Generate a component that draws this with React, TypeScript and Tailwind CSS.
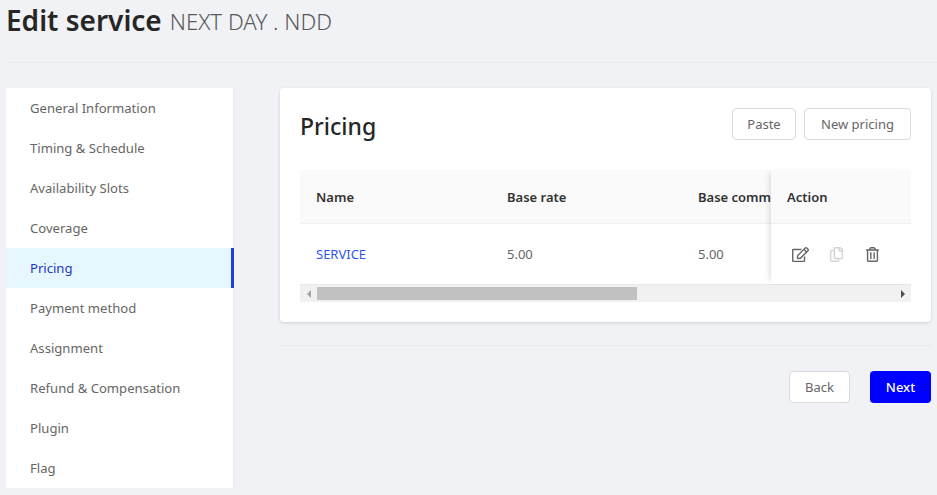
import { FaRegEdit, FaRegCopy, FaRegTrashAlt } from "react-icons/fa";

const items = ["General Information","Timing & Schedule","Availability Slots","Coverage","Pricing","Payment method","Assignment","Refund & Compensation","Plugin","Flag"];

export default function App() {
  return (
    <div className="h-[495px] w-[937px] overflow-hidden bg-[#f0f2f5] px-[6px] font-['Noto_Sans',sans-serif] text-[13px] text-[#666666]">
      <div className="flex h-[45px] items-start gap-2">
        <h1 className="text-[28px] font-semibold leading-[41px] text-[#262626]">Edit service</h1>
        <span className="text-[22.2px] font-light leading-[43px] text-[#595959]">NEXT DAY . NDD</span>
      </div>
      <div className="mt-[17px] -mr-[6px] h-px bg-[#e8e8e8]" />
      <div className="mt-[25px] flex">
        <nav className="h-[400px] w-[228px] shrink-0 border-r border-[#ebebeb] bg-white text-[13.1px]">
          {items.map((t) => (
            <div key={t} className={t === "Pricing" ? "-mr-px flex h-10 items-center border-r-[3px] border-[#1d3fd8] bg-[#e6f7ff] pl-6 pt-px text-[#1d39c4]" : "flex h-10 items-center pl-6 pt-px"}>{t}</div>
          ))}
        </nav>
        <main className="ml-[46px] w-[651px]">
          <section className="h-[234px] rounded bg-white px-5 pt-5 shadow-[0_1px_3px_rgba(0,0,0,0.15)]">
            <div className="flex h-[62px] items-start justify-between">
              <h2 className="text-[23px] font-medium leading-9 text-[#262626]">Pricing</h2>
              <div className="flex gap-2">
                <button className="h-8 w-[64px] rounded border border-[#d9d9d9] bg-white pt-px">Paste</button>
                <button className="h-8 w-[107px] rounded border border-[#d9d9d9] bg-white pt-px">New pricing</button>
              </div>
            </div>
            <div className="flex">
              <div className="w-[471px] overflow-hidden">
                <div className="flex h-[54px] w-[600px] items-center border-b border-[#f0f0f0] bg-[#fafafa] pt-[2px] font-semibold text-[#333333]">
                  <div className="w-[191px] pl-4">Name</div>
                  <div className="w-[191px] pl-4">Base rate</div>
                  <div className="w-[191px] whitespace-nowrap pl-4">Base commission</div>
                </div>
                <div className="flex h-[60px] w-[600px] items-center pt-px">
                  <div className="w-[191px] pl-4 text-[#2f54eb]">SERVICE</div>
                  <div className="w-[191px] pl-4">5.00</div>
                  <div className="w-[191px] pl-4">5.00</div>
                </div>
              </div>
              <div className="w-[140px] shadow-[-4px_0_6px_-3px_rgba(0,0,0,0.15)]">
                <div className="flex h-[54px] items-center border-b border-[#f0f0f0] bg-[#fafafa] pl-4 pt-[2px] font-semibold text-[#333333]">Action</div>
                <div className="flex h-[60px] items-center pl-[21px]">
                  <FaRegEdit className="text-[17px] text-[#666666]" />
                  <FaRegCopy className="ml-[20px] text-[15px] text-[#d4d4d4]" />
                  <FaRegTrashAlt className="ml-[21px] text-[15px] text-[#666666]" />
                </div>
              </div>
            </div>
            <div className="flex h-[18px] items-center border-t border-[#e8e8e8] bg-[#f1f1f1]">
              <div className="flex w-[17px] shrink-0 justify-center">
                <div className="h-0 w-0 border-y-[4px] border-r-[4px] border-y-transparent border-r-[#a3a3a3]" />
              </div>
              <div className="h-[13px] w-[320px] bg-[#c1c1c1]" />
              <div className="flex flex-1 justify-end pr-[6px]">
                <div className="h-0 w-0 border-y-[4px] border-l-[4px] border-y-transparent border-l-[#505050]" />
              </div>
            </div>
          </section>
          <div className="mt-[23px] h-px bg-[#e8e8e8]" />
          <div className="mt-[25px] flex justify-end gap-5">
            <button className="h-8 w-[61px] rounded border border-[#d9d9d9] bg-white pt-px">Back</button>
            <button className="h-8 w-[61px] rounded bg-[#0000ff] pt-px font-medium text-white">Next</button>
          </div>
        </main>
      </div>
    </div>
  );
}
